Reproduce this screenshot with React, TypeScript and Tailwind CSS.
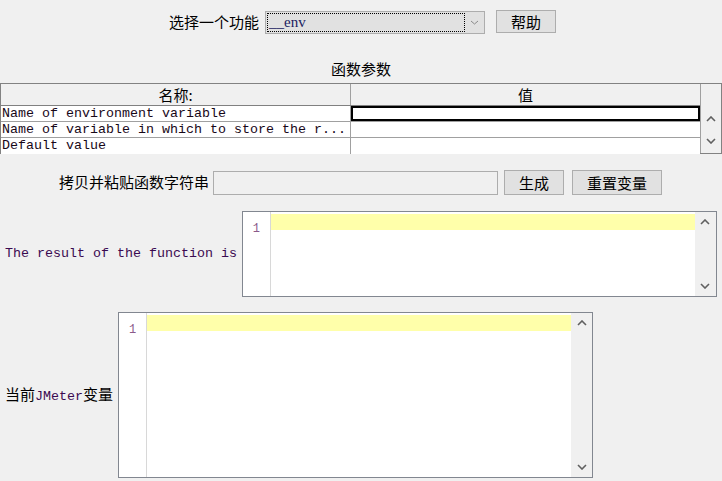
import React from "react";

const cjk = "font-['Noto_Sans_CJK_SC',sans-serif]";
const mono = "font-['Liberation_Mono','Noto_Sans_CJK_SC',monospace]";

function Chevron({ up }: { up?: boolean }) {
    return (
        <svg width="10" height="6" viewBox="0 0 10 6" className="block">
            <path
                d={up ? "M1 5 L5 1 L9 5" : "M1 1 L5 5 L9 1"}
                fill="none"
                stroke="#606060"
                strokeWidth="1.6"
            />
        </svg>
    );
}

function Button({ label, width }: { label: string; width: string }) {
    return (
        <button
            type="button"
            className={`${width} h-[25px] border border-[#adadad] bg-[#e1e1e1] text-[15px] leading-none text-black ${cjk}`}
        >
            {label}
        </button>
    );
}

function Editor({ height }: { height: string }) {
    return (
        <div className={`flex w-[475px] ${height} border border-[#828790] bg-white`}>
            <div className="w-[28px] shrink-0 border-r border-[#d8d8d8] pt-[2px] text-center">
                <span className={`text-[12px] leading-[16px] text-[#8a5a8a] ${mono}`}>1</span>
            </div>
            <div className="flex-1 pt-[2px]">
                <div className="h-[16px] bg-[#ffffaa]"></div>
            </div>
            <div className="flex w-[21px] shrink-0 flex-col items-center justify-between bg-[#f0f0f0] py-[7px]">
                <Chevron up />
                <Chevron />
            </div>
        </div>
    );
}

const params = [
    "Name of environment variable",
    "Name of variable in which to store the r...",
    "Default value",
];

export default function App() {
    return (
        <div className="h-[481px] w-[722px] overflow-hidden bg-[#f0f0f0] text-black">
            {/* function picker */}
            <div className="flex items-center justify-center pl-[3px] pt-[10px]">
                <span className={`mr-[6px] text-[15px] ${cjk}`}>选择一个功能</span>
                <div className="flex h-[23px] w-[220px] items-center border border-[#adadad] bg-[#e1e1e1] pl-[1px]">
                    <div className="flex h-[19px] w-[198px] items-center border border-dotted border-black pl-[1px]">
                        <span className="font-['Liberation_Serif',serif] text-[15px] leading-none text-[#202060]">__env</span>
                    </div>
                    <div className="flex flex-1 items-center justify-center">
                        <svg width="9" height="5" viewBox="0 0 9 5">
                            <path d="M1 1 L4.5 4 L8 1" fill="none" stroke="#8a8a8a" strokeWidth="1" />
                        </svg>
                    </div>
                </div>
                <div className="ml-[11px]">
                    <button
                        type="button"
                        className={`h-[23px] w-[60px] border border-[#adadad] bg-[#e1e1e1] text-[15px] leading-none ${cjk}`}
                    >
                        帮助
                    </button>
                </div>
            </div>

            <div className={`mt-[25px] h-[20px] text-center text-[15px] leading-[20px] ${cjk}`}>函数参数</div>

            {/* parameter table */}
            <div className="mt-[4px] flex h-[71px] border border-[#828282] bg-[#f0f0f0]">
                <div className="flex-1">
                    <div className={`flex h-[22px] border-b border-[#808080] text-[15px] leading-[21px] ${cjk}`}>
                        <div className="w-[350px] border-r border-[#a0a0a0] text-center">名称:</div>
                        <div className="flex-1 text-center">值</div>
                    </div>
                    {params.map((p, i) => (
                        <div key={p} className="flex h-[16px] border-b border-[#a0a0a0] bg-white last:border-b-0">
                            <div className={`w-[350px] overflow-hidden whitespace-nowrap border-r border-[#a0a0a0] pl-[1px] text-[13.33px] leading-[15px] text-[#180818] ${mono}`}>
                                {p}
                            </div>
                            <div className={i === 0 ? "flex-1 border-2 border-black" : "flex-1"}></div>
                        </div>
                    ))}
                </div>
                <div className="flex w-[21px] flex-col items-center gap-[16px] border-l border-[#a0a0a0] pt-[32px]">
                    <Chevron up />
                    <Chevron />
                </div>
            </div>

            {/* copy & paste row */}
            <div className="mt-[16px] flex items-center justify-center pr-[1px]">
                <span className={`mr-[4px] text-[15px] ${cjk}`}>拷贝并粘贴函数字符串</span>
                <div className="mr-[6px] h-[24px] w-[285px] border border-[#adadad] bg-[#f0f0f0]"></div>
                <div className="mr-[8px]">
                    <Button label="生成" width="w-[60px]" />
                </div>
                <Button label="重置变量" width="w-[90px]" />
            </div>

            {/* result */}
            <div className="mt-[16px] flex items-center pl-[5px]">
                <span className={`mr-[5px] text-[13.33px] text-[#3a0a50] ${mono}`}>The result of the function is</span>
                <Editor height="h-[86px]" />
            </div>

            {/* jmeter variables */}
            <div className="mt-[15px] flex items-center pl-[5px]">
                <span className="mr-[5px] flex items-baseline text-[15px]">
                    <span className={cjk}>当前</span>
                    <span className={`text-[13.33px] text-[#3a0a50] ${mono}`}>JMeter</span>
                    <span className={cjk}>变量</span>
                </span>
                <Editor height="h-[166px]" />
            </div>
        </div>
    );
}
